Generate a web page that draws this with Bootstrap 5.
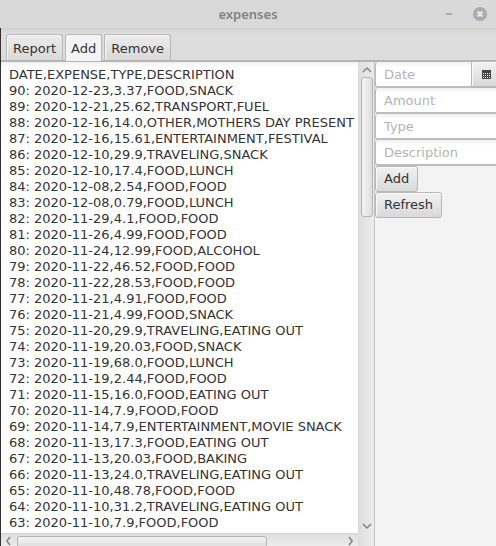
<!DOCTYPE html>
<html lang="en">
<head>
<meta charset="utf-8">
<meta name="viewport" content="width=device-width, initial-scale=1">
<title>expenses</title>
<link href="https://cdn.jsdelivr.net/npm/bootstrap@5.3.0/dist/css/bootstrap.min.css" rel="stylesheet">
<style>
  body { font: 13px/16px "DejaVu Sans", sans-serif; color: #333; background: #f3f3f3; }
  svg { display: block; }
  .titlebar { height: 28px; background: #d9d9d9; color: #828282; }
  .titlebar h1 { font: 600 13px/16px "Noto Sans", sans-serif; }
  .titlebar .win-tools { width: 56px; gap: 21px; padding-right: 9px; }
  .titlebar button { color: #a9abb2; }
  .frame { border-left: 1px solid #33302f; }
  .tabstrip { height: 34px; gap: 2px; padding: 6px 5px 0; border-bottom: 2px solid #b5b5b5; background: linear-gradient(#d0d0d0, #dddddd 5px); }
  .tabstrip .nav-link { height: 26px; padding: 2px 6px 0; color: #333; border: 1px solid #b8b8b8; border-bottom: 0; border-radius: 3px 3px 0 0; background: linear-gradient(#ececec, #d9d9d9); box-shadow: inset 1px 1px #f6f6f6; }
  .tabstrip .nav-link.active { height: 27px; padding: 2px 5px 1px; background: #f4f4f4; color: #333; }
  .log-pane { width: 374px; border-right: 1px solid #c4c4c4; }
  .log-text { resize: none; border: 0; outline: 0; padding: 5px 0 0 8px; white-space: pre; overflow: hidden; color: #333; background: linear-gradient(#f0f0f0, #fff 5px); }
  .vbar { width: 16px; padding: 3px 2px 2px; gap: 3px; border-left: 1px solid #dadada; background: linear-gradient(90deg, #dedede, #ececec); }
  .hbar { height: 13px; padding: 2px 5px 0; gap: 6px; border-top: 1px solid #d2d2d2; background: linear-gradient(#dedede, #ececec); }
  .thumb-v { width: 12px; height: 30%; border: 1px solid #b4b4b4; border-radius: 3px; background: linear-gradient(90deg, #f4f4f4, #dedede); }
  .thumb-h { width: 77%; height: 12px; border: 1px solid #b4b4b4; border-radius: 3px; background: linear-gradient(#f4f4f4, #dedede); }
  .corner { width: 16px; background: linear-gradient(90deg, #dedede, #ececec); }
  .entry { min-width: 0; }
  .entry input { height: 26px; padding: 0 8px; border: 1px solid #bdbdbd; border-width: 0 0 2px 1px; border-radius: 3px 0 0 3px; outline: 0; color: #333; background: linear-gradient(#f0f0f0, #fff 5px); }
  .entry input::placeholder { color: #b4b4b4; opacity: 1; }
  .entry .push { height: 26px; padding: 0 8px; line-height: 16px; font-size: 13px; color: #333; border: 1px solid #b8b8b8; border-radius: 3px; background: linear-gradient(#f2f2f2, #d9d9d9); box-shadow: inset 1px 1px #fafafa; }
  .entry .pick { width: 25px; padding: 0 0 0 10px; border-width: 0 0 2px 1px; border-radius: 0; }
</style>
<script src="https://cdn.jsdelivr.net/npm/bootstrap@5.3.0/dist/js/bootstrap.bundle.min.js"></script>
</head>
<body class="vh-100 overflow-hidden d-flex flex-column">
<header class="titlebar d-flex align-items-center flex-shrink-0">
  <div class="win-tools flex-shrink-0"></div>
  <h1 class="flex-fill text-center mb-0">expenses</h1>
  <div class="win-tools d-flex align-items-center justify-content-end flex-shrink-0">
    <button type="button" class="border-0 p-0 bg-transparent" aria-label="Minimize"><svg width="6" height="14"><path d="M0 6h6v2H0z" fill="currentColor"/></svg></button>
    <button type="button" class="border-0 p-0 bg-transparent" aria-label="Close"><svg width="14" height="14"><circle cx="7" cy="7" r="7" fill="currentColor"/><path d="M4.5 4.5l5 5m0-5l-5 5" stroke="#e9e9e9" stroke-width="2.2"/></svg></button>
  </div>
</header>
<main class="frame flex-fill d-flex flex-column overflow-hidden">
  <div class="tabstrip nav d-flex flex-nowrap flex-shrink-0" role="tablist">
    <button type="button" class="nav-link" role="tab" aria-selected="false">Report</button>
    <button type="button" class="nav-link active" role="tab" aria-selected="true">Add</button>
    <button type="button" class="nav-link" role="tab" aria-selected="false">Remove</button>
  </div>
  <div class="flex-fill d-flex overflow-hidden">
    <section class="log-pane flex-shrink-0 d-flex flex-column">
      <div class="flex-fill d-flex overflow-hidden">
        <textarea class="log-text flex-fill" aria-label="Expense list" readonly>DATE,EXPENSE,TYPE,DESCRIPTION
90: 2020-12-23,3.37,FOOD,SNACK
89: 2020-12-21,25.62,TRANSPORT,FUEL
88: 2020-12-16,14.0,OTHER,MOTHERS DAY PRESENT
87: 2020-12-16,15.61,ENTERTAINMENT,FESTIVAL
86: 2020-12-10,29.9,TRAVELING,SNACK
85: 2020-12-10,17.4,FOOD,LUNCH
84: 2020-12-08,2.54,FOOD,FOOD
83: 2020-12-08,0.79,FOOD,LUNCH
82: 2020-11-29,4.1,FOOD,FOOD
81: 2020-11-26,4.99,FOOD,FOOD
80: 2020-11-24,12.99,FOOD,ALCOHOL
79: 2020-11-22,46.52,FOOD,FOOD
78: 2020-11-22,28.53,FOOD,FOOD
77: 2020-11-21,4.91,FOOD,FOOD
76: 2020-11-21,4.99,FOOD,SNACK
75: 2020-11-20,29.9,TRAVELING,EATING OUT
74: 2020-11-19,20.03,FOOD,SNACK
73: 2020-11-19,68.0,FOOD,LUNCH
72: 2020-11-19,2.44,FOOD,FOOD
71: 2020-11-15,16.0,FOOD,EATING OUT
70: 2020-11-14,7.9,FOOD,FOOD
69: 2020-11-14,7.9,ENTERTAINMENT,MOVIE SNACK
68: 2020-11-13,17.3,FOOD,EATING OUT
67: 2020-11-13,20.03,FOOD,BAKING
66: 2020-11-13,24.0,TRAVELING,EATING OUT
65: 2020-11-10,48.78,FOOD,FOOD
64: 2020-11-10,31.2,TRAVELING,EATING OUT
63: 2020-11-10,7.9,FOOD,FOOD</textarea>
        <div class="vbar flex-shrink-0 d-flex flex-column align-items-center" aria-hidden="true">
          <svg class="flex-shrink-0" width="10" height="9" fill="none" stroke="#858585" stroke-width="1.5"><path d="M1 7l4-4 4 4"/></svg>
          <div class="thumb-v flex-shrink-0"></div>
          <svg class="flex-shrink-0 mt-auto" width="10" height="9" fill="none" stroke="#858585" stroke-width="1.5"><path d="M1 2l4 4 4-4"/></svg>
        </div>
      </div>
      <div class="d-flex flex-shrink-0" aria-hidden="true">
        <div class="hbar flex-fill d-flex overflow-hidden">
          <svg class="flex-shrink-0" width="5" height="10" fill="none" stroke="#858585" stroke-width="1.5"><path d="M4 1L0.8 5 4 9"/></svg>
          <div class="flex-fill"><div class="thumb-h"></div></div>
          <svg class="flex-shrink-0" width="5" height="10" fill="none" stroke="#858585" stroke-width="1.5"><path d="M1 1l3.2 4L1 9"/></svg>
        </div>
        <div class="corner flex-shrink-0"></div>
      </div>
    </section>
    <form class="entry flex-fill d-flex flex-column align-items-start">
      <div class="d-flex w-100">
        <input class="flex-fill w-100" type="text" placeholder="Date" aria-label="Date">
        <button type="button" class="push pick flex-shrink-0" aria-label="Open calendar"><svg width="9" height="9"><path d="M0 0h9v9H0z" fill="#444"/><path d="M1 3.5h7M1 5.5h7M1 7.5h7" stroke="#eee" stroke-dasharray="1 1"/></svg></button>
      </div>
      <input class="w-100" type="text" placeholder="Amount" aria-label="Amount">
      <input class="w-100" type="text" placeholder="Type" aria-label="Type">
      <input class="w-100" type="text" placeholder="Description" aria-label="Description">
      <button type="button" class="push">Add</button>
      <button type="button" class="push">Refresh</button>
    </form>
  </div>
</main>
</body>
</html>
